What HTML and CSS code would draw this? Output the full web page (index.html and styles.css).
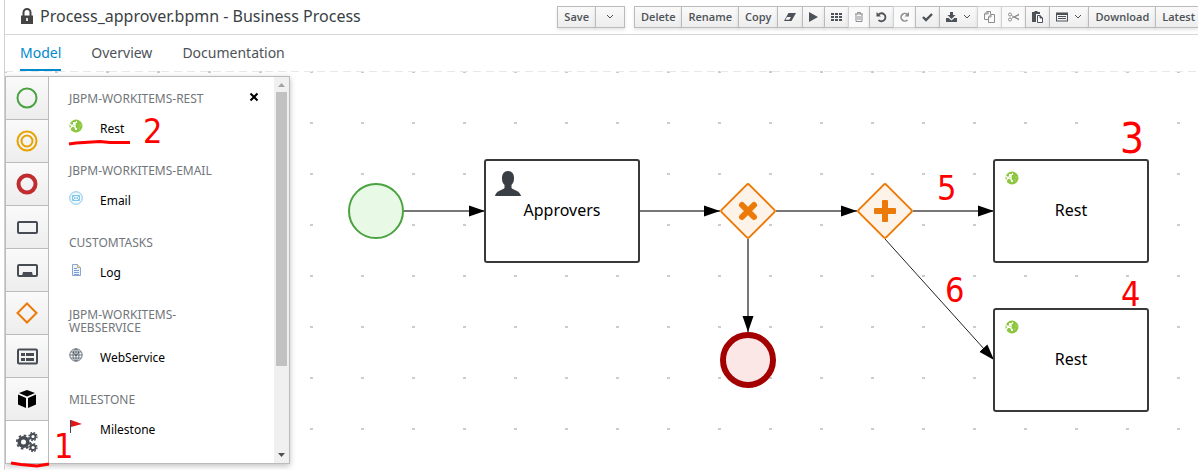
FILE: index.html
```html
<!DOCTYPE html>
<html lang="en">
<head>
<meta charset="utf-8">
<title>Process_approver.bpmn - Business Process</title>
<link rel="stylesheet" href="styles.css">
</head>
<body>
<div class="editor">
  <header class="header">
    <h1 class="title">
      <svg class="lock" width="12" height="16" viewBox="0 0 12 16"><path d="M2.500 8V4.500a3.500 3.500 0 0 1 7 0V8" fill="none" stroke="#444" stroke-width="2"/><path d="M0 7.500h12V16H0z" fill="#444"/><path d="M5 10h2v3H5z" fill="#ddd"/></svg>
      Process_approver.bpmn - Business Process
    </h1>
    <div class="toolbar">
      <div class="group">
        <button class="btn" type="button">Save</button>
        <button class="btn wide" type="button" aria-label="More save options"><svg width="8" height="12" viewBox="0 0 8 12"><path class="line" d="M1 4l3 3 3-3"/></svg></button>
      </div>
      <div class="group">
        <button class="btn" type="button">Delete</button>
        <button class="btn" type="button">Rename</button>
        <button class="btn" type="button">Copy</button>
        <button class="btn" type="button" aria-label="Clear"><svg width="12" height="12" viewBox="0 0 12 12"><path d="M4.500 2H12L7.500 10H0z"/><path d="M3 6h3.800L5.400 8.800H1.500z" fill="#f5f5f5"/></svg></button>
        <button class="btn" type="button" aria-label="Run"><svg width="9" height="12" viewBox="0 0 9 12"><path d="M0 1l9 5-9 5z"/></svg></button>
        <button class="btn" type="button" aria-label="Grid"><svg width="11" height="12" viewBox="0 0 11 12"><path d="M0 2h3v2H0zM4 2h3v2H4zM8 2h3v2H8zM0 5h3v2H0zM4 5h3v2H4zM8 5h3v2H8zM0 8h3v2H0zM4 8h3v2H4zM8 8h3v2H8z"/></svg></button>
        <button class="btn" type="button" aria-label="Remove" disabled><svg width="8" height="12" viewBox="0 0 8 12"><path class="line" d="M0 3h8M2.500 3V1.500h3V3M1 3v7.500h6V3M3 5v4M5 5v4"/></svg></button>
        <button class="btn" type="button" aria-label="Undo"><svg width="11" height="12" viewBox="0 0 11 12"><path d="M2.500 3.500A4 4 0 1 1 2.500 9" fill="none" stroke="currentColor" stroke-width="1.800"/><path d="M.500 1v4.500H5z"/></svg></button>
        <button class="btn" type="button" aria-label="Redo" disabled><svg width="9" height="12" viewBox="0 0 9 12"><path d="M7.500 3.500A3.800 3.800 0 1 0 7.500 9" fill="none" stroke="currentColor" stroke-width="1.600"/><path d="M9 1v4.500H4.500z"/></svg></button>
        <button class="btn" type="button" aria-label="Validate"><svg width="11" height="12" viewBox="0 0 11 12"><path d="M1 6l3 3 6-6" fill="none" stroke="currentColor" stroke-width="2.400"/></svg></button>
        <button class="btn" type="button" aria-label="Export"><svg width="11" height="12" viewBox="0 0 11 12"><path d="M4 1h3v3h2.500l-4 4-4-4H4zM0 7h2.500l3 2.500 3-2.500H11v4H0z"/></svg><svg width="8" height="12" viewBox="0 0 8 12"><path class="line" d="M1 4l3 3 3-3"/></svg></button>
        <button class="btn" type="button" aria-label="Copy selection" disabled><svg width="11" height="12" viewBox="0 0 11 12"><path class="line" d="M4 3.500V.500H3L.500 3v5.500H4M3 .500h3.500v3M.500 3H3V.500M7 3.500h3.500v8H4.500V6zM7 3.500V6H4.500"/></svg></button>
        <button class="btn" type="button" aria-label="Cut" disabled><svg width="11" height="12" viewBox="0 0 11 12"><g class="line"><circle cx="2" cy="3.500" r="1.500"/><circle cx="2" cy="8.500" r="1.500"/><path d="M3.500 4.500L11 9M3.500 7.500L11 3M6 6l5 2M6 6l5-2"/></g></svg></button>
        <button class="btn" type="button" aria-label="Paste"><svg width="11" height="12" viewBox="0 0 11 12"><path d="M0 1h2.500V0h3v1H8v2H4v8H0z"/><path d="M5.500 4.500h2.500v2.500h2.500v4.500h-5z" fill="#fff" stroke="currentColor"/><path d="M8 4l3 3H8z"/></svg></button>
        <button class="btn" type="button" aria-label="View"><svg width="12" height="12" viewBox="0 0 12 12"><path d="M0 1.500h12v9H0zM1 4v5.500h10V4z" fill-rule="evenodd"/><path d="M2 5h8v1H2zM2 7h8v1H2z"/></svg><svg width="8" height="12" viewBox="0 0 8 12"><path class="line" d="M1 4l3 3 3-3"/></svg></button>
        <button class="btn" type="button">Download</button>
        <button class="btn last" type="button">Latest</button>
      </div>
    </div>
  </header>

  <nav class="tabs">
    <a class="tab active" href="#model">Model</a>
    <a class="tab" href="#overview">Overview</a>
    <a class="tab" href="#documentation">Documentation</a>
  </nav>

  <main class="canvas">
    <svg class="diagram" width="100%" height="100%">
      <defs>
        <pattern id="grid" x="26" y="26" width="51" height="51" patternUnits="userSpaceOnUse">
          <path d="M24 26h3" stroke="#ccc" stroke-width="2"/>
        </pattern>
        <marker id="arrow" markerUnits="userSpaceOnUse" markerWidth="16" markerHeight="12" refX="16" refY="6" orient="auto"><path d="M0 .500L16 6 0 11.500z"/></marker>
        <symbol id="globe" viewBox="0 0 14 14">
          <circle cx="7" cy="7" r="6.500" fill="#8cc63f"/>
          <path d="M1 5l2 2-2 3M3 7l3-3 2-1M3 7l3 1 1 3M6 4v4" fill="none" stroke="#fff" stroke-width="1.300"/>
          <path d="M4 3h2v2H4zM2 6h2v2H2zM6 9h2v2H6zM7 2h1v2H7z" fill="#fff"/>
          <path d="M10 6h3M9 9h2" stroke="#a8d66a"/>
        </symbol>
      </defs>
      <rect width="100%" height="100%" fill="url(#grid)"/>
      <path d="M0 .500H2000" stroke="#e8e8e8" stroke-dasharray="8 5"/>
      <g transform="translate(-5 -71)">
        <g class="flow">
          <path d="M404 211H485"/>
          <path d="M640 211H720"/>
          <path d="M776 211H857"/>
          <path d="M913 211H994"/>
          <path d="M748 239V332"/>
        </g>
        <path class="flow thin" d="M885 239L994 360"/>
        <circle cx="376" cy="211" r="27" fill="#e8fae6" stroke="#4aa241" stroke-width="2"/>
        <circle cx="748" cy="360" r="25" fill="#fce7e7" stroke="#a30000" stroke-width="6"/>
        <g class="gateway">
          <rect x="728.500" y="191.500" width="39" height="39" rx="2" transform="rotate(45 748 211)"/>
          <rect x="865.500" y="191.500" width="39" height="39" rx="2" transform="rotate(45 885 211)"/>
        </g>
        <path d="M742 205l12 12M754 205l-12 12" stroke="#ec7a08" stroke-width="6"  stroke-linecap="round"/>
        <g fill="#ec7a08"><rect x="874" y="208" width="22" height="6" rx="1"/><rect x="882" y="200" width="6" height="22" rx="1"/></g>
        <g class="task">
          <rect x="485" y="160" width="154" height="102" rx="2"/>
          <rect x="994" y="160" width="154" height="102" rx="2"/>
          <rect x="994" y="309" width="154" height="102" rx="2"/>
        </g>
        <path d="M508 171c4 0 6 3 6 7 0 4-1 5-2.500 7v3c1.500 2 8.500 2.500 9.500 8h-26c1-5.500 8-6 9.500-8v-3c-1.500-2-2.500-3-2.500-7 0-4 2-7 6-7z" fill="#393f44"/>
        <use href="#globe" x="1005" y="171" width="14" height="14"/>
        <use href="#globe" x="1005" y="320" width="14" height="14"/>
        <g class="label">
          <text x="562" y="216">Approvers</text>
          <text x="1071" y="216">Rest</text>
          <text x="1071" y="365">Rest</text>
        </g>
      </g>
    </svg>

    <aside class="palette">
      <div class="categories">
        <button class="category" type="button" aria-label="Start events"><svg width="22" height="22"><circle cx="11" cy="11" r="9.500" fill="none" stroke="#4aa241" stroke-width="2"/></svg></button>
        <button class="category" type="button" aria-label="Intermediate events"><svg width="22" height="22"><g fill="none" stroke="#e8a200" stroke-width="2"><circle cx="11" cy="11" r="9.500"/><circle cx="11" cy="11" r="5.500"/></g></svg></button>
        <button class="category" type="button" aria-label="End events"><svg width="22" height="22"><circle cx="11" cy="11" r="8.500" fill="none" stroke="#c12c2f" stroke-width="4"/></svg></button>
        <button class="category" type="button" aria-label="Activities"><svg width="22" height="22"><rect x="2" y="6" width="19" height="11" rx="1" fill="none" stroke="#474c54" stroke-width="2"/></svg></button>
        <button class="category" type="button" aria-label="Subprocesses"><svg width="22" height="22"><rect x="2" y="6" width="19" height="11" rx="1" fill="none" stroke="#474c54" stroke-width="2"/><path d="M6 17l1-4h9l1 4z" fill="#474c54"/></svg></button>
        <button class="category" type="button" aria-label="Gateways"><svg width="22" height="22"><path d="M11 1.500L20.500 11 11 20.500 1.500 11z" fill="none" stroke="#ec7a08" stroke-width="2"/></svg></button>
        <button class="category" type="button" aria-label="Containers"><svg width="22" height="22"><rect x="2" y="4.500" width="19" height="14" rx="1" fill="none" stroke="#474c54" stroke-width="2"/><path d="M5 8h4v3H5zM10 8h8v3h-8zM5 13h4v3H5zM10 13h8v3h-8z" fill="#474c54"/></svg></button>
        <button class="category" type="button" aria-label="Data objects"><svg width="22" height="22"><path d="M11 2l8 3-8 3.500L3 5zM2 6.500l8 3.500v10l-8-3.500zM20 6.500L12 10v10l8-3.500z"/></svg></button>
        <button class="category selected" type="button" aria-label="Service tasks"><svg width="22" height="22"><g fill="none" stroke="#474c54"><circle cx="7.500" cy="11" r="4.300" stroke-width="3.600"/><circle cx="7.500" cy="11" r="6.700" stroke-width="1.800" stroke-dasharray="2.600 2.660"/><circle cx="17" cy="5.500" r="2.500" stroke-width="1.800"/><circle cx="17" cy="5.500" r="4" stroke-width="1.300" stroke-dasharray="1.700 1.440"/><circle cx="17" cy="16.500" r="2.500" stroke-width="1.800"/><circle cx="17" cy="16.500" r="4" stroke-width="1.300" stroke-dasharray="1.700 1.440"/></g></svg></button>
      </div>
      <div class="flyout">
        <div class="sections">
          <section class="section">
            <h2 class="heading">JBPM-WORKITEMS-REST</h2>
            <button class="item" type="button"><svg width="14" height="14"><use href="#globe" width="14" height="14"/></svg>Rest</button>
          </section>
          <section class="section">
            <h2 class="heading">JBPM-WORKITEMS-EMAIL</h2>
            <button class="item" type="button"><svg width="14" height="14"><g fill="#eef9fe" stroke="#82c8ea"><circle cx="7" cy="7" r="6.300"/><path d="M3.500 4.500h7v5h-7zl3.500 3 3.500-3M3.500 9.500L6 7M10.500 9.500L8 7"/></g></svg>Email</button>
          </section>
          <section class="section">
            <h2 class="heading">CUSTOMTASKS</h2>
            <button class="item" type="button"><svg width="14" height="14"><path d="M3.500 1.500h5l3 3v8h-8z" fill="#edf3fb" stroke="#8fa4cc"/><path d="M8.500 1.500v3h3" fill="#f5e4ac" stroke="#b9ab87"/><path d="M5 5.500h3M5 7.500h5M5 9.500h5M5 11.500h5" stroke="#7b9fd8"/></svg>Log</button>
          </section>
          <section class="section">
            <h2 class="heading">JBPM-WORKITEMS-WEBSERVICE</h2>
            <button class="item" type="button"><svg width="14" height="14"><g fill="none" stroke="#66707a"><circle cx="7" cy="7" r="6.200"/><ellipse cx="7" cy="7" rx="3" ry="6"/><path d="M1 7h12M7 1v12M2 4h10M2 10h10"/></g><path d="M4 4l3 4 3-4" fill="none" stroke="#4b555f"/></svg>WebService</button>
          </section>
          <section class="section">
            <h2 class="heading">MILESTONE</h2>
            <button class="item" type="button"><svg width="14" height="14"><path d="M2 0l11 4L2 7z" fill="#e0161b"/><path d="M1.500 0v13" stroke="#444"/></svg>Milestone</button>
          </section>
        </div>
        <button class="close" type="button" aria-label="Close"><svg width="10" height="10"><path d="M1.500 1.500l7 7M8.500 1.500l-7 7" stroke="#000" stroke-width="2"/></svg></button>
        <div class="scrollbar">
          <svg width="7" height="4"><path d="M0 4l3.500-4L7 4z" fill="#a3a3a3"/></svg>
          <div class="track"><div class="thumb"></div></div>
          <svg width="7" height="4"><path d="M0 0l3.500 4L7 0z" fill="#505050"/></svg>
        </div>
      </div>
    </aside>

    <svg class="notes" width="100%" height="100%">
      <g transform="translate(-5 -71)">
        <path d="M69 144l7-1 24-1.500 10 1h20M11 463l10 1.500 16 1.500 12-2" fill="none" stroke="#f00" stroke-width="3"/>
        <g class="note">
          <text x="54" y="458">1</text>
          <text x="143" y="143">2</text>
          <text class="large" x="1120" y="153">3</text>
          <text x="1121" y="306">4</text>
          <text x="937" y="200">5</text>
          <text x="945" y="302">6</text>
        </g>
      </g>
    </svg>
  </main>
</div>
</body>
</html>
```
FILE: styles.css
```css
* {
  box-sizing: border-box;
}

body {
  margin: 0;
  font-family: "Noto Sans", "Open Sans", sans-serif;
  font-size: 12px;
  color: #393f44;
  background: #fff;
}

button {
  font: inherit;
  color: inherit;
}

.editor {
  display: flex;
  flex-direction: column;
  min-height: 100vh;
  margin-left: 4px;
  border-left: 1px solid #d1d1d1;
  overflow: hidden;
}

.header {
  display: flex;
  justify-content: space-between;
  height: 35px;
  padding-left: 16px;
  border-bottom: 1px solid #d6d6d6;
}

.title {
  display: flex;
  align-items: center;
  gap: 7px;
  margin: 0;
  padding-bottom: 2px;
  font-size: 16px;
  font-weight: 400;
  line-height: 24px;
  white-space: nowrap;
}

.toolbar {
  display: flex;
  gap: 10px;
  padding-top: 6px;
}

.group {
  display: flex;
  height: 22px;
}

.btn {
  display: flex;
  align-items: center;
  gap: 6px;
  margin: 0 -1px 0 0;
  padding: 0 6px;
  border: 1px solid #bbb;
  background: linear-gradient(#fafafa, #ededed);
  box-shadow: 0 2px 3px rgba(3, 3, 3, 0.1);
  font-family: "Open Sans", "Noto Sans", sans-serif;
  font-size: 11px;
  font-weight: 600;
  line-height: 18px;
  color: #4d5258;
  white-space: nowrap;
}

.btn:disabled {
  border-color: #d1d1d1;
  background: #fafafa;
  color: #8b8d8f;
}

.btn svg {
  fill: currentColor;
}

.btn .line {
  fill: none;
  stroke: currentColor;
}

.wide {
  padding: 0 10px;
}

.last {
  margin: 0;
  padding-right: 3px;
  border-right: 0;
}

.tabs {
  display: flex;
  gap: 30px;
  height: 36px;
  padding-left: 15px;
}

.tab {
  padding-top: 8px;
  font-size: 14px;
  line-height: 20px;
  color: #4d5258;
  text-decoration: none;
}

.active {
  border-bottom: 2px solid #0088ce;
  color: #0088ce;
}

.canvas {
  position: relative;
  display: flex;
  flex: 1;
  align-items: flex-start;
  padding: 5px 0;
}

.diagram,
.notes {
  position: absolute;
  inset: 0;
}

.notes {
  pointer-events: none;
}

.flow {
  fill: none;
  stroke: #777;
  stroke-width: 2px;
}

.flow path,
.thin {
  marker-end: url(#arrow);
}

.thin {
  stroke: #222;
  stroke-width: 1px;
}

.gateway {
  fill: #fef3e8;
  stroke: #ec7a08;
  stroke-width: 2px;
}

.task {
  fill: #fff;
  stroke: #393939;
  stroke-width: 2px;
}

.label {
  fill: #000;
  font-size: 16px;
  text-anchor: middle;
}

.note {
  fill: #f00;
  font-family: "DejaVu Sans Condensed", "DejaVu Sans", sans-serif;
  font-size: 34px;
}

.large {
  font-size: 42px;
}

.palette {
  position: relative;
  display: flex;
  border: 1px solid #bbb;
  border-left: 0;
  background: #fff;
  box-shadow: 0 2px 6px rgba(3, 3, 3, 0.25);
}

.categories {
  display: flex;
  flex-direction: column;
  border-right: 1px solid #bbb;
  border-left: 1px solid #bbb;
}

.category {
  display: flex;
  align-items: center;
  justify-content: center;
  width: 42px;
  height: 43px;
  padding: 0;
  border: 0;
  border-bottom: 1px solid #bbb;
  background: linear-gradient(#fafafa, #ededed);
}

.selected {
  height: 42px;
  border-bottom: 0;
  background: #fff;
}

.flyout {
  display: flex;
}

.sections {
  display: flex;
  flex-direction: column;
  gap: 25px;
  width: 170px;
  padding: 15px 0 0 20px;
}

.heading {
  width: 150px;
  margin: 0 0 14px;
  font-size: 12px;
  font-weight: 400;
  line-height: 13px;
  color: #72767b;
}

.item {
  display: flex;
  gap: 17px;
  padding: 0;
  border: 0;
  background: none;
  line-height: 20px;
  color: #000;
}

.close {
  align-self: flex-start;
  height: 10px;
  margin: 15px 15px 0 30px;
  padding: 0;
  border: 0;
  background: none;
}

.close svg {
  display: block;
}

.scrollbar {
  display: flex;
  flex-direction: column;
  align-items: center;
  gap: 5px;
  width: 15px;
  padding: 6px 0;
  background: #f0f0f0;
}

.track {
  flex: 1;
  width: 11px;
}

.thumb {
  height: 77%;
  background: #c1c1c1;
}
```
